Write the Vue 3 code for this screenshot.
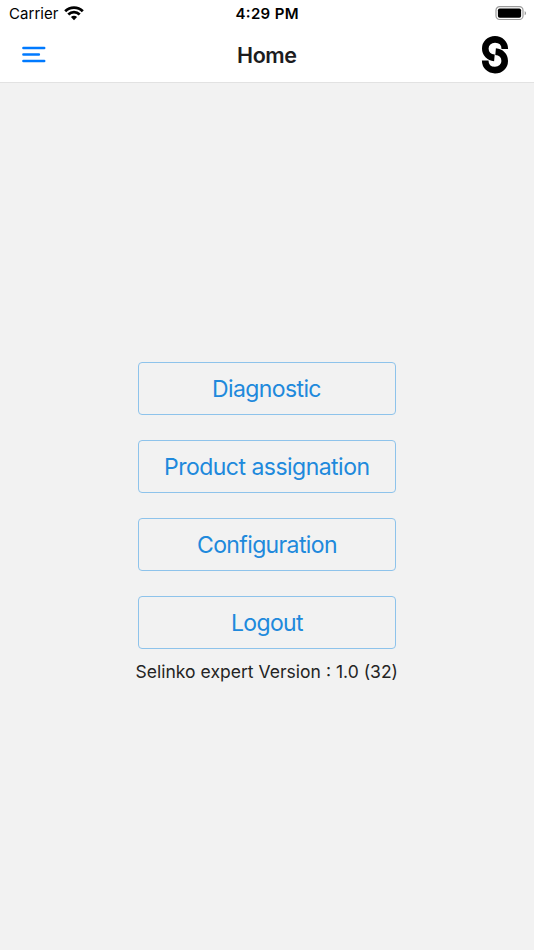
<script setup>
const actions = ['Diagnostic', 'Product assignation', 'Configuration', 'Logout']
const widths = [109.5, 206, 140.5, 72.5]
</script>

<template>
  <div class="screen">
    <header class="header">
      <div class="status">
        <div class="carrier">
          <svg class="carrier-text" width="50" height="20"><text x="0" y="13" textLength="49.5">Carrier</text></svg>
          <svg class="wifi" width="20" height="15" viewBox="0 0 20 15" fill="none" stroke="#000" stroke-width="2.8">
            <path d="M1.2 5.200C6.200.3 13.800.3 18.800 5.200" />
            <path d="M4.300 8.500C7.600 5.300 12.400 5.300 15.700 8.500" />
            <path d="M10 14.200 6.900 11.100C8.700 9.400 11.300 9.400 13.100 11.100Z" fill="#000" stroke="none" />
          </svg>
        </div>
        <div class="time"><svg width="64" height="20"><text x="0.5" y="13" textLength="63">4:29 PM</text></svg></div>
        <svg class="battery" width="32" height="14" viewBox="0 0 32 14">
          <rect x="1" y=".7" width="27" height="12.800" rx="3.600" fill="none" stroke="#9b9b9b" stroke-width="1.200" />
          <rect x="2.900" y="2.500" width="23.200" height="9.200" rx="1.800" />
          <path d="M29.700 4.900c1.800.7 1.800 3.700 0 4.400z" fill="#999" />
        </svg>
      </div>
      <div class="nav">
        <svg class="menu" width="24" height="17" viewBox="0 0 24 17" fill="none" stroke="#007aff" stroke-width="2.500" stroke-linecap="round">
          <path d="M1.400 2H22.200M1.400 8.500H16.900M1.400 15H22.200" />
        </svg>
        <h1 class="title"><svg width="62" height="30"><text x="1" y="22.5" textLength="60">Home</text></svg></h1>
        <svg class="logo" width="28" height="38" viewBox="0 0 28 38" fill="none" stroke="#000" stroke-width="6.600">
          <path d="M23.800 13C23.800 7.200 19.500 3.400 14 3.400S4.300 7.300 4.300 12.600C4.300 17.800 8 21.400 13.400 21.900" />
          <path d="M4.200 24.500C4.200 30.300 8.500 34.100 14 34.100S23.700 30.200 23.700 24.900C23.700 19.700 20 16.100 14.600 15.600" />
        </svg>
      </div>
    </header>
    <main class="content">
      <button v-for="(label, i) in actions" :key="label" class="action">
        <svg :width="widths[i]" height="34"><text x="0" y="26" :textLength="widths[i]">{{ label }}</text></svg>
      </button>
      <p class="version"><svg width="263" height="26"><text x="-0.5" y="19" textLength="262.500">Selinko expert Version : 1.0 (32)</text></svg></p>
    </main>
  </div>
</template>

<style>
body { margin: 0; background: #f2f2f2; }
</style>

<style scoped>
.screen { width: 534px; height: 950px; display: flex; flex-direction: column; background: #f2f2f2; font-family: Inter, sans-serif; overflow: hidden; }
.header { height: 82px; background: #fff; border-bottom: 1px solid #e2e2e2; }
.status { height: 27px; display: grid; grid-template-columns: 1fr 64px 1fr; }
.carrier { display: flex; padding: 6px 0 0 9px; font-size: 15px; }
.wifi { margin-left: 5px; }
.time { padding-top: 6px; font-size: 15px; font-weight: 600; }
.battery { justify-self: end; margin: 6px 7px 0 0; }
.nav { height: 55px; display: grid; grid-template-columns: 1fr 62px 1fr; align-items: center; }
.menu { margin-left: 22px; }
.title { margin: 0; height: 30px; font-size: 21.500px; font-weight: 600; color: #1c1c1e; }
.logo { justify-self: end; margin-right: 25px; }
svg { display: block; overflow: visible; }
text { fill: currentColor; }
.content { padding-top: 279px; display: flex; flex-direction: column; align-items: center; }
.action { box-sizing: border-box; width: 258px; height: 52.500px; margin: 0 0 25.500px; padding: 0; display: flex; align-items: center; justify-content: center; border: 1px solid #8ec3eb; border-radius: 4px; background: transparent; color: #2089dc; font: 23px Inter, sans-serif; }
.version { margin: -15px 0 0; font-size: 17.500px; color: #242424; }
</style>
